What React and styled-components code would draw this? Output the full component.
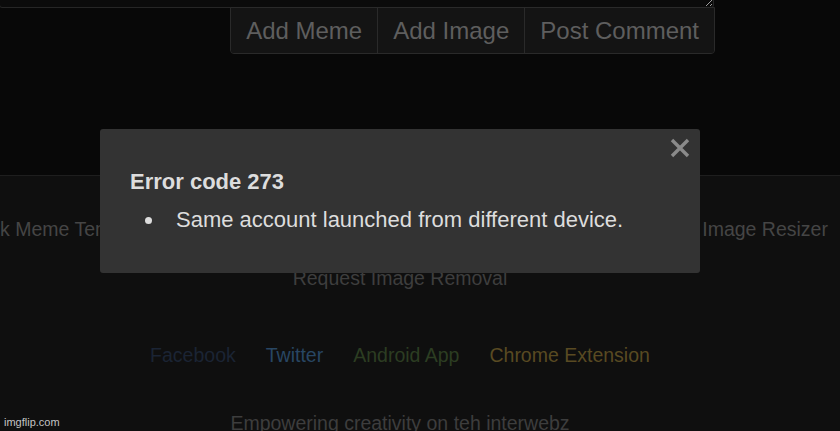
import React from "react";
import styled, { createGlobalStyle } from "styled-components";

const GlobalStyle = createGlobalStyle`
  html, body {
    margin: 0;
    padding: 0;
    background: #080808;
    overflow: hidden;
  }
  body {
    font-family: "Liberation Sans", Arial, sans-serif;
  }
  * { box-sizing: border-box; }
`;

const Page = styled.div`
  position: relative;
  width: 840px;
  height: 431px;
  overflow: hidden;
  display: flex;
  flex-direction: column;
`;

const Main = styled.section`
  height: 175px;
  flex: none;
  background: #080808;
`;

const CommentForm = styled.form`
  width: 715px;
  margin: 0;
  display: flex;
  flex-direction: column;
`;

const CommentBox = styled.textarea`
  display: block;
  width: 100%;
  height: 90px;
  margin: -82px 0 0 -1px;
  background: #0b0b0b;
  border: 1px solid #262626;
  border-radius: 3px;
  color: #777;
  resize: both;
  color-scheme: dark;
  font-family: "Liberation Sans", Arial, sans-serif;
`;

const ButtonGroup = styled.div`
  align-self: flex-end;
  display: flex;
  margin-top: -1px;
  border: 1px solid #2a2a2a;
  border-radius: 0 0 4px 4px;
  background: #141414;
  overflow: hidden;
`;

const FormButton = styled.button`
  font-family: "Liberation Sans", Arial, sans-serif;
  font-size: 24px;
  line-height: 28px;
  padding: 9px 15px 8px 15px;
  background: #141414;
  color: #5e5e5e;
  border: none;
  border-left: ${(p) => (p.$first ? "none" : "1px solid #2a2a2a")};
  cursor: pointer;
`;

const Footer = styled.footer`
  flex: 1;
  background: #0f0f0f;
  border-top: 1px solid #1e1e1e;
  padding: 42px 40px 0 0;
  font-size: 19.5px;
  line-height: 22px;
  text-align: center;
`;

const LinksRow = styled.nav`
  display: flex;
  justify-content: space-between;
  margin: 0 -28px 0 -39px;
  white-space: nowrap;
`;

const FooterLink = styled.a`
  color: ${(p) => p.$color || "#454545"};
  text-decoration: none;
`;

const SingleRow = styled.div`
  margin-top: ${(p) => p.$gap}px;
`;

const SocialRow = styled.div`
  display: flex;
  justify-content: center;
  gap: 30px;
  margin-top: 55px;
`;

const Tagline = styled.div`
  margin-top: 46px;
  color: #3d3d3d;
`;

const Watermark = styled.div`
  position: absolute;
  left: 4px;
  bottom: 2px;
  font-size: 11px;
  line-height: 13px;
  color: #c4c4c4;
  font-family: "Liberation Sans", Arial, sans-serif;
`;

const Modal = styled.div`
  position: absolute;
  left: 100px;
  top: 129px;
  width: 600px;
  height: 144px;
  background: #333333;
  border-radius: 3px;
  padding: 40px 30px 0 30px;
  color: #dddddd;
`;

const CloseButton = styled.button`
  position: absolute;
  top: 9px;
  right: 10px;
  width: 20px;
  height: 20px;
  padding: 0;
  border: none;
  background: transparent;
  cursor: pointer;
  display: block;
`;

const ModalTitle = styled.div`
  font-size: 22px;
  line-height: 25px;
  font-weight: bold;
`;

const ErrorList = styled.ul`
  list-style: none;
  margin: 13px 0 0 0;
  padding-left: 46px;
  font-size: 22px;
  line-height: 25px;
`;

const ErrorItem = styled.li`
  position: relative;
  &::before {
    content: "";
    position: absolute;
    left: -31px;
    top: 10px;
    width: 7px;
    height: 7px;
    border-radius: 50%;
    background: #dddddd;
  }
`;

export default function App() {
  return (
    <>
      <GlobalStyle />
      <Page>
        <Main>
          <CommentForm onSubmit={(e) => e.preventDefault()}>
            <CommentBox aria-label="Comment" />
            <ButtonGroup>
              <FormButton type="button" $first>Add Meme</FormButton>
              <FormButton type="button">Add Image</FormButton>
              <FormButton type="submit">Post Comment</FormButton>
            </ButtonGroup>
          </CommentForm>
        </Main>
        <Footer>
          <LinksRow>
            <FooterLink href="#">Blank Meme Templates</FooterLink>
            <FooterLink href="#">GIF Maker</FooterLink>
            <FooterLink href="#">Meme Generator</FooterLink>
            <FooterLink href="#">Image Resizer</FooterLink>
          </LinksRow>
          <SingleRow $gap={27}>
            <FooterLink href="#" $color="#3e3e3e">Request Image Removal</FooterLink>
          </SingleRow>
          <SocialRow>
            <FooterLink href="#" $color="#1b2434">Facebook</FooterLink>
            <FooterLink href="#" $color="#284663">Twitter</FooterLink>
            <FooterLink href="#" $color="#2c3d22">Android App</FooterLink>
            <FooterLink href="#" $color="#594a22">Chrome Extension</FooterLink>
          </SocialRow>
          <Tagline>Empowering creativity on teh interwebz</Tagline>
        </Footer>
        <Watermark>imgflip.com</Watermark>
        <Modal role="dialog">
          <CloseButton aria-label="Close">
            <svg width="20" height="20" viewBox="0 0 20 20">
              <path d="M2 2 L18 18 M18 2 L2 18" stroke="#8a8a8a" strokeWidth="3.4" strokeLinecap="butt" />
            </svg>
          </CloseButton>
          <ModalTitle>Error code 273</ModalTitle>
          <ErrorList>
            <ErrorItem>Same account launched from different device.</ErrorItem>
          </ErrorList>
        </Modal>
      </Page>
    </>
  );
}
